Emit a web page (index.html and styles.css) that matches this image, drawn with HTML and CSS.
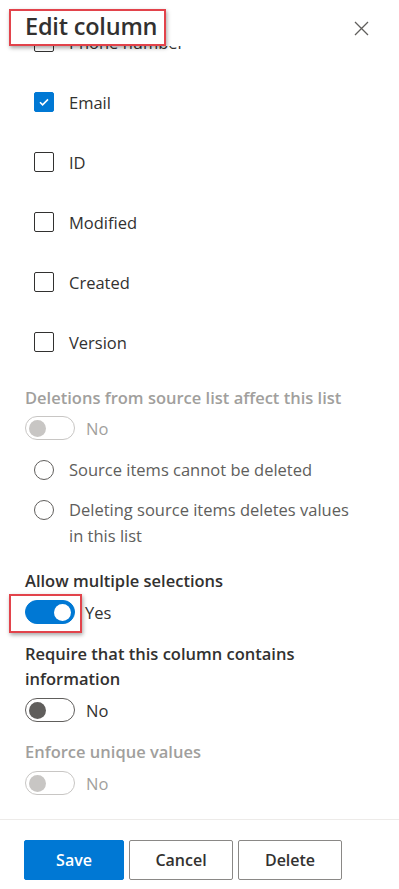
FILE: index.html
```html
<!DOCTYPE html>
<html lang="en">
<head>
    <meta charset="UTF-8">
    <title>Edit column</title>
    <link rel="stylesheet" href="styles.css">
</head>
<body>
    <div class="panel">
        <div class="header">
            <h2 class="title">Edit column</h2>
            <div class="highlight title-mark"></div>
            <button class="close" aria-label="Close">
                <svg width="15" height="15" viewBox="0 0 15 15"><path d="M1 1l13 13M14 1L1 14" stroke="#605e5c" stroke-width="1.3" fill="none"/></svg>
            </button>
        </div>

        <div class="scroll">
            <div class="scroll-content">
                <div class="check-list">
                    <label class="check-row"><span class="box"></span>Phone number</label>
                    <label class="check-row"><span class="box checked"><svg width="14" height="14" viewBox="0 0 14 14"><path d="M3 7.2l2.6 2.6L11 4.4" stroke="#fff" stroke-width="1.6" fill="none"/></svg></span>Email</label>
                    <label class="check-row"><span class="box"></span>ID</label>
                    <label class="check-row"><span class="box"></span>Modified</label>
                    <label class="check-row"><span class="box"></span>Created</label>
                    <label class="check-row"><span class="box"></span>Version</label>
                </div>

                <div class="field field-first">
                    <div class="field-label disabled">Deletions from source list affect this list</div>
                    <div class="toggle-row"><span class="toggle toggle-disabled"><span class="thumb"></span></span><span class="toggle-text muted">No</span></div>
                    <div class="radio-list">
                        <label class="radio-row"><span class="radio"></span><span>Source items cannot be deleted</span></label>
                        <label class="radio-row"><span class="radio"></span><span>Deleting source items deletes values in this list</span></label>
                    </div>
                </div>

                <div class="field field-multi">
                    <div class="field-label">Allow multiple selections</div>
                    <div class="toggle-row">
                        <span class="toggle toggle-on"><span class="thumb"></span></span><span class="toggle-text yes">Yes</span>
                        <div class="highlight toggle-mark"></div>
                    </div>
                </div>

                <div class="field">
                    <div class="field-label">Require that this column contains information</div>
                    <div class="toggle-row"><span class="toggle toggle-off"><span class="thumb"></span></span><span class="toggle-text">No</span></div>
                </div>

                <div class="field">
                    <div class="field-label disabled">Enforce unique values</div>
                    <div class="toggle-row"><span class="toggle toggle-disabled"><span class="thumb"></span></span><span class="toggle-text muted">No</span></div>
                </div>
            </div>
        </div>

        <div class="footer">
            <button class="btn btn-primary">Save</button>
            <button class="btn">Cancel</button>
            <button class="btn">Delete</button>
        </div>
    </div>
</body>
</html>
```

FILE: styles.css
```css
body, html { margin: 0; padding: 0; background: #fff; font-family: "Open Sans", "Noto Sans", sans-serif; color: #323130; }
.panel { width: 399px; height: 889px; display: flex; flex-direction: column; overflow: hidden; }

.header { position: relative; z-index: 2; height: 46px; flex-shrink: 0; box-sizing: border-box; padding: 10px 25px 0; display: flex; align-items: flex-start; justify-content: space-between; background: #fff; }
.title { margin: 0; font-size: 23.5px; line-height: 32px; font-weight: 600; color: #323130; letter-spacing: -0.2px; }
.close { background: none; border: none; padding: 0; margin: 11px 5px 0 0; width: 15px; height: 15px; cursor: pointer; }
.close svg { display: block; }

.highlight { position: absolute; border: 2.5px solid #e2434b; box-shadow: 1px 2px 4px rgba(0,0,0,0.35); box-sizing: border-box; pointer-events: none; }
.title-mark { left: 9px; top: 9px; width: 157px; height: 37px; }

.scroll { flex: 1; overflow: hidden; padding: 0 25px; }
.scroll-content { margin-top: -14px; }

.check-list { display: flex; flex-direction: column; gap: 40px; padding-left: 9px; }
.check-row { display: flex; align-items: center; height: 20px; font-size: 16.5px; gap: 15px; }
.box { width: 20px; height: 20px; box-sizing: border-box; border: 1px solid #323130; border-radius: 2px; display: flex; align-items: center; justify-content: center; flex-shrink: 0; }
.box.checked { background: #0078d4; border-color: #0078d4; }

.field { margin-top: 17px; }
.field-first { margin-top: 33px; }
.field-multi { margin-top: 19px; }
.field-label { font-size: 16.5px; font-weight: 600; line-height: 25px; color: #323130; }
.field-label.disabled { color: #a19f9d; }

.toggle-row { position: relative; display: flex; align-items: center; margin-top: 7px; height: 24px; }
.field-first .toggle-row { margin-top: 6px; }
.toggle { width: 50px; height: 24px; box-sizing: border-box; border-radius: 12px; border: 1.5px solid #605e5c; display: flex; align-items: center; padding: 0 3px; }
.thumb { width: 17px; height: 17px; border-radius: 50%; background: #605e5c; }
.toggle-on { background: #0078d4; border-color: #0078d4; justify-content: flex-end; }
.toggle-on .thumb { background: #fff; }
.toggle-disabled { border-color: #c8c6c4; }
.toggle-disabled .thumb { background: #c8c6c4; }
.toggle-text { margin-left: 11px; font-size: 16.5px; }
.toggle-text.yes { margin-left: 10px; }
.toggle-text.muted { color: #a19f9d; }
.toggle-mark { left: -16px; top: -6px; width: 73px; height: 39px; }

.radio-list { display: flex; flex-direction: column; gap: 14px; margin-top: 17px; padding-left: 9px; }
.radio-row { display: flex; align-items: flex-start; gap: 15px; font-size: 16.5px; line-height: 26px; color: #605e5c; padding-right: 20px; }
.radio { width: 20px; height: 20px; box-sizing: border-box; border: 1px solid #605e5c; border-radius: 50%; margin-top: 3px; flex-shrink: 0; }

.footer { border-top: 1px solid #edebe9; padding: 20px 24px 9px; display: flex; gap: 5px; flex-shrink: 0; }
.btn { width: 104px; height: 40px; box-sizing: border-box; border: 1px solid #8a8886; border-radius: 2px; background: #fff; color: #323130; font-family: inherit; font-size: 16px; font-weight: 600; cursor: pointer; }
.btn-primary { width: 100px; background: #0078d4; border-color: #0078d4; color: #fff; }
```
